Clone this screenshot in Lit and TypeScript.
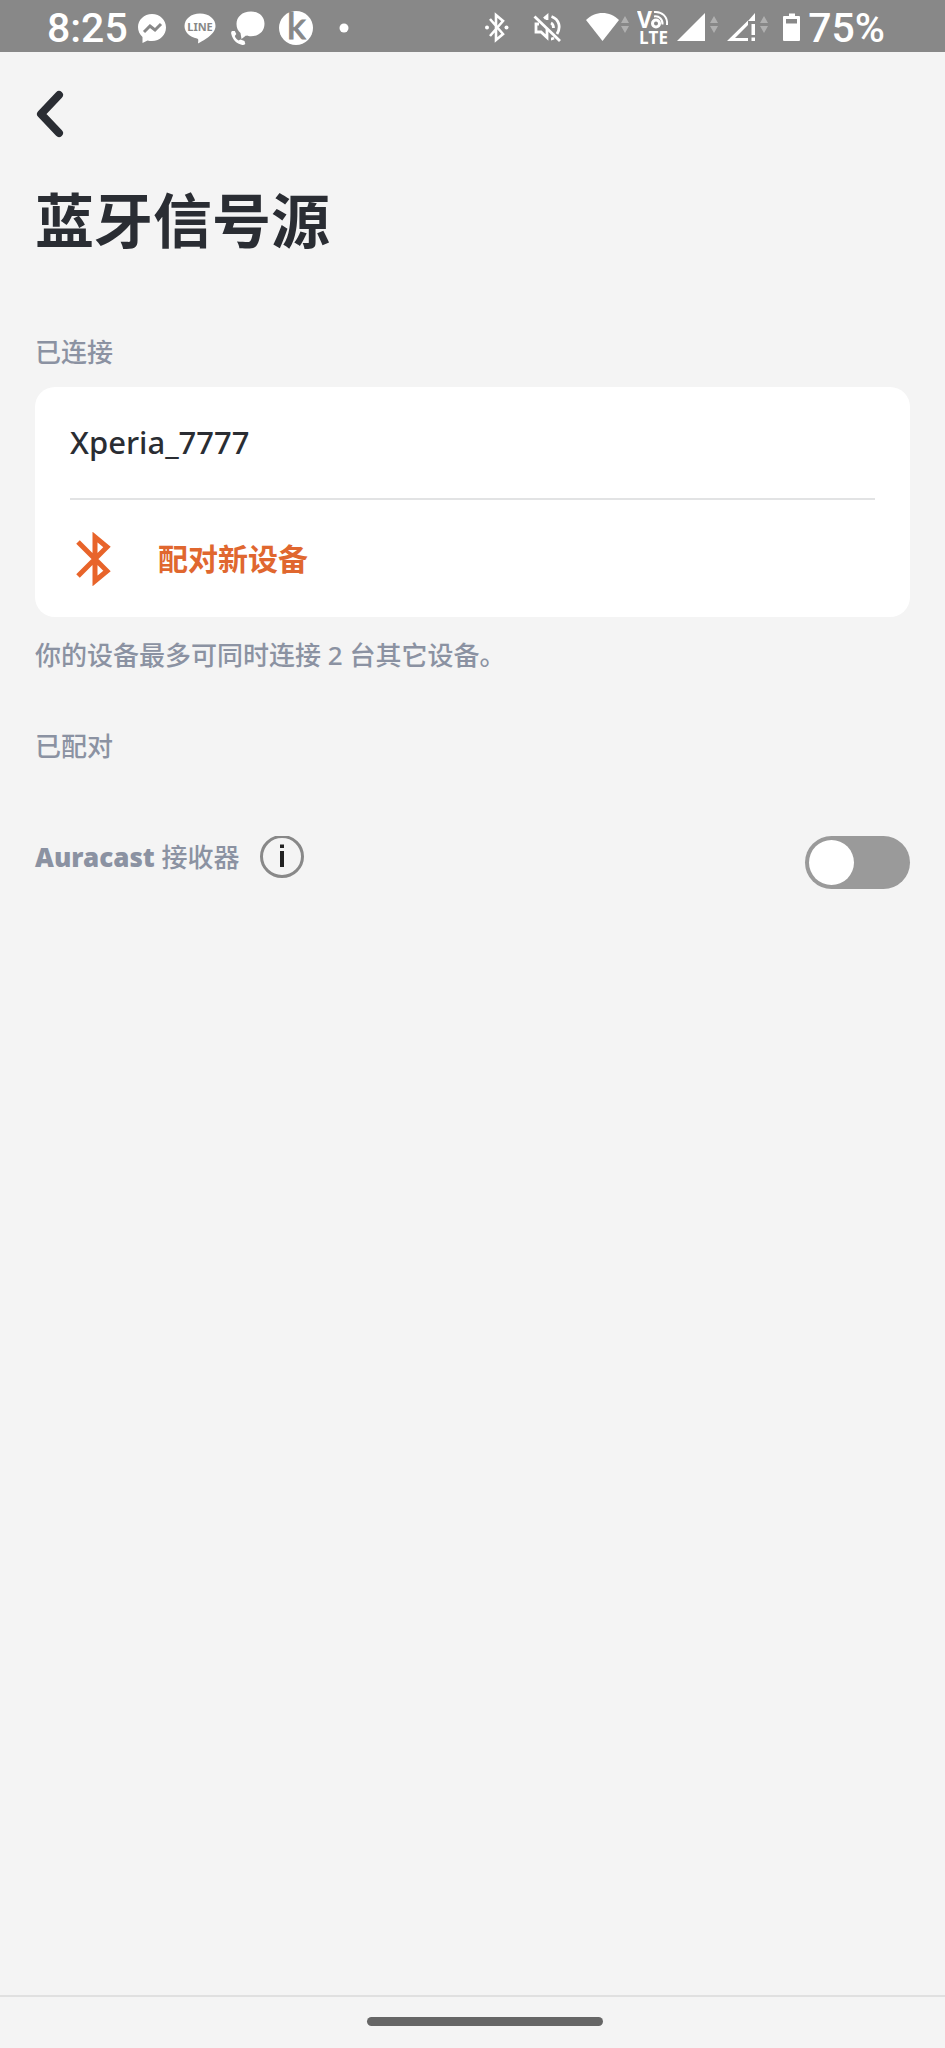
import { LitElement, html, css, svg } from "lit";
import { customElement, state } from "lit/decorators.js";

const trafficArrows = (x: number) => svg`
  <path d="M${x} 23l4-7 4 7z M${x} 26l4 7 4-7z" fill="#b0b0b0" />
`;

@customElement("status-bar")
export class StatusBar extends LitElement {
  static styles = css`
    :host {
      display: flex;
      align-items: center;
      justify-content: space-between;
      box-sizing: border-box;
      height: 52px;
      padding: 0 60px 0 47px;
      background: #888888;
      color: #fff;
      font: 500 41px/52px Roboto, "Liberation Sans", sans-serif;
    }
    span {
      padding-top: 4px;
    }
    svg {
      display: block;
      height: 52px;
      fill: #fff;
    }
    .side,
    .icons,
    .battery {
      display: flex;
      align-items: center;
    }
    .side {
      gap: 8px;
    }
    .notices {
      gap: 6px;
    }
    .icons {
      gap: 12px;
    }
    .modes {
      display: flex;
      gap: 24px;
      padding-right: 16px;
    }
    .battery {
      gap: 7px;
      padding-left: 6px;
    }
    .line {
      font: 700 11px "Noto Sans", sans-serif;
      fill: #888888;
    }
    .kay {
      font: 400 37px Lato, sans-serif;
      fill: #888888;
      stroke: #888888;
    }
    .lte {
      font: 700 17px "Open Sans", sans-serif;
    }
    .vee {
      font: 700 23px "Open Sans", sans-serif;
    }
  `;

  render() {
    return html`
      <div class="side notices">
        <span>8:25</span>
        <div class="icons">
          <svg width="36" viewBox="0 0 36 52" aria-hidden="true">
            <path d="M18 14c-8 0-14 6-14 13 0 4 1.500 7 4.500 10v6l5-2.600c1.500.4 3 .6 4.500.6 8 0 14-6 14-13.500S26 14 18 14z" />
            <path d="M10 32l6-6 5 4 6-6" fill="none" stroke="#888888" stroke-width="3" />
          </svg>
          <svg width="36" viewBox="0 0 36 52" aria-hidden="true">
            <path d="M18 13.500C9 13.500 2.500 19 2.500 26c0 6 5 11 12.500 12.500 1.500.3 1.500 1.500 1 5C20 41 33.500 35 33.500 26c0-7-6.500-12.500-15.500-12.500z" />
            <text class="line" x="18" y="31" text-anchor="middle">LINE</text>
          </svg>
          <svg width="36" viewBox="0 0 36 52" aria-hidden="true">
            <path d="M21 11.500C12 11.500 6.500 17 6.500 24c0 4 1.500 7 4 9l1 6 4.500-3.500c2 .6 3 .8 5 .8 8 0 13.500-5 13.500-12.500S29 11.500 21 11.500z" />
            <path d="M2 31c-1 1-1 2-.7 3 1.500 6 5 9.500 11 11 1 .2 2 0 3-1l-.8-3-4-1.500-2 1c-2-1.200-3-2.500-3.700-4.500l1.500-2L4.800 31z" />
          </svg>
          <svg width="36" viewBox="0 0 36 52" aria-hidden="true">
            <circle cx="18" cy="28" r="17" />
            <text class="kay" x="9" y="39">k</text>
          </svg>
          <svg width="36" viewBox="0 0 36 52" aria-hidden="true"><circle cx="18" cy="28" r="4.500" /></svg>
        </div>
      </div>
      <div class="side">
        <div class="modes">
          <svg width="24" viewBox="0 0 24 52" aria-hidden="true">
            <path d="M5 19l13 15-7 6V15l7 6L5 36" fill="none" stroke="#fff" stroke-width="2.600" />
            <circle cx="2" cy="27.500" r="2" /><circle cx="21.500" cy="27.500" r="2" />
          </svg>
          <svg width="28" viewBox="0 0 28 52" aria-hidden="true">
            <g fill="none" stroke="#fff" stroke-width="2.800">
              <path d="M1.500 16.500L27 41" />
              <path d="M6 24H3v8h5l6 5.500V29M14 20v-4l-3 2.500" />
              <path d="M18.500 16.500c8 3 9.500 11 5.500 17.500M18 23c2 1 2.500 3 2.500 5M18 39c1 0 2-.5 3-1" />
            </g>
          </svg>
        </div>
        <svg width="44" viewBox="0 0 44 52" aria-hidden="true">
          <path d="M1 20C10 10.500 25 10.500 34 20L17.500 41z" />
          ${trafficArrows(36)}
        </svg>
        <svg width="32" viewBox="0 0 32 52" aria-hidden="true">
          <text class="vee" x="0" y="28">V</text>
          <text class="lte" x="2" y="44">LTE</text>
          <g fill="none" stroke="#fff">
            <circle cx="19" cy="23.500" r="3.500" stroke-width="3" />
            <path d="M17 16.500c5-1 9 3 8.500 8M17 12c8-1 14 5 13 13" stroke-width="2" />
          </g>
        </svg>
        <svg width="42" viewBox="0 0 42 52" aria-hidden="true">
          <path d="M0 41L28 13v28z" />
          ${trafficArrows(33)}
        </svg>
        <svg width="42" viewBox="0 0 42 52" aria-hidden="true">
          <path d="M0 41L21 20.500V25L8 38h13v3zM28 13v8h-7zM24.500 24H28v11h-3.500zM24.500 37.500H28V41h-3.500z" />
          ${trafficArrows(33)}
        </svg>
        <div class="battery">
          <svg width="18" viewBox="0 0 18 52" aria-hidden="true">
            <path fill-rule="evenodd" d="M6 13.500h6v2.500h4q1 0 1 1v23q0 1-1 1H1q-1 0-1-1V17q0-1 1-1h5zM3 19v4.500h11V19z" />
          </svg>
          <span>75%</span>
        </div>
      </div>
    `;
  }
}

@customElement("app-root")
export class AppRoot extends LitElement {
  static styles = css`
    :host {
      display: flex;
      flex-direction: column;
      min-height: 100vh;
      background: #f4f4f4;
      color: #2a2d33;
      font: 500 26px/36px "Noto Sans", "Noto Sans CJK SC", sans-serif;
    }
    main {
      flex: 1;
      padding: 32px 35px;
    }
    button {
      padding: 0;
      border: 0;
      background: none;
      color: inherit;
      font: inherit;
      cursor: pointer;
    }
    svg {
      display: block;
    }
    h1 {
      margin: 28px 0 0;
      font-size: 59px;
      line-height: 80px;
      font-weight: 700;
    }
    h2,
    .hint {
      margin: 0;
      color: #8b92a2;
      font-size: 26px;
      line-height: 36px;
      font-weight: 500;
    }
    .connected {
      margin-top: 74px;
    }
    .card {
      margin: 17px 0 20px;
      padding: 0 35px;
      border-radius: 20px;
      background: #fff;
      font-size: 31px;
    }
    .device {
      padding: 37px 0;
      border-bottom: 2px solid #e2e3e4;
      line-height: 37px;
    }
    .pair {
      display: flex;
      align-items: center;
      gap: 40px;
      width: 100%;
      height: 117px;
      color: #e0672f;
      font-size: 30px;
      font-weight: 700;
    }
    .paired {
      margin-top: 55px;
    }
    .receiver {
      display: flex;
      justify-content: space-between;
      align-items: flex-start;
      margin-top: 72px;
    }
    .caption {
      display: flex;
      gap: 20px;
      align-items: center;
      color: #8b92a2;
    }
    .brand {
      font-weight: 900;
    }
    .switch {
      appearance: none;
      width: 105px;
      height: 53px;
      margin: 0;
      padding: 4px;
      border-radius: 27px;
      background: #9a9a9a;
      cursor: pointer;
    }
    .switch::before {
      content: "";
      display: block;
      width: 45px;
      height: 45px;
      border-radius: 50%;
      background: #fff;
    }
    .switch:checked {
      background: #e0672f;
    }
    .switch:checked::before {
      margin-left: auto;
    }
    footer {
      display: flex;
      justify-content: center;
      padding: 20px 0 22px 24px;
      border-top: 2px solid #e0e0e0;
    }
    .handle {
      width: 236px;
      height: 9px;
      border-radius: 5px;
      background: #666;
    }
  `;

  @state() private receiving = false;

  render() {
    return html`
      <status-bar></status-bar>
      <main>
        <button aria-label="返回">
          <svg width="32" height="60" viewBox="0 0 32 60" fill="none" stroke="#2a2d33" stroke-width="8"
            stroke-linecap="round" stroke-linejoin="round">
            <path d="M24 11L6 30l18 19" />
          </svg>
        </button>
        <h1>蓝牙信号源</h1>
        <h2 class="connected">已连接</h2>
        <section class="card">
          <div class="device">Xperia_7777</div>
          <button class="pair">
            <svg width="48" height="54" viewBox="0 0 48 54" fill="none" stroke="#e8642a" stroke-width="5" aria-hidden="true">
              <path d="M8 10l29 29-12 10V5l12 10L8 44" />
            </svg>
            <span>配对新设备</span>
          </button>
        </section>
        <p class="hint">你的设备最多可同时连接 2 台其它设备。</p>
        <h2 class="paired">已配对</h2>
        <div class="receiver">
          <div class="caption">
            <label for="receiver"><span class="brand">Auracast</span> 接收器</label>
            <button aria-label="说明">
              <svg width="44" height="42" viewBox="0 0 44 42">
                <ellipse cx="22" cy="20.500" rx="20.500" ry="20" fill="none" stroke="#888" stroke-width="3" />
                <path d="M20 8.500h4v3.500h-4zM20 15h4v16h-4z" fill="#222" />
              </svg>
            </button>
          </div>
          <input
            id="receiver"
            class="switch"
            type="checkbox"
            role="switch"
            .checked=${this.receiving}
            @change=${(e: Event) => (this.receiving = (e.target as HTMLInputElement).checked)}
          />
        </div>
      </main>
      <footer><div class="handle"></div></footer>
    `;
  }
}
